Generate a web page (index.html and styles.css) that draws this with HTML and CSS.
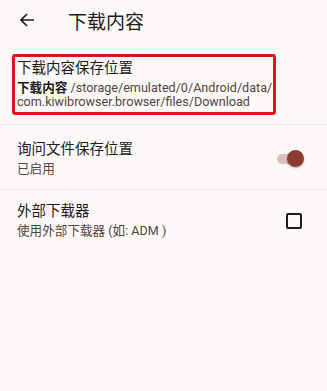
FILE: index.html
```html
<!DOCTYPE html>
<html lang="zh-CN">
<head>
  <meta charset="UTF-8">
  <meta name="viewport" content="width=device-width, initial-scale=1.0">
  <title>下载内容</title>
  <link rel="stylesheet" href="styles.css">
</head>
<body>

<div class="screen">
  <div class="toolbar">
    <svg class="back" width="16" height="16" viewBox="0 0 16 16">
      <path d="M15 8H2M8 2L2 8l6 6" fill="none" stroke="#201a19" stroke-width="1.7"/>
    </svg>
    <div class="title">下载内容</div>
  </div>

  <div class="pref first">
    <div class="highlight">
      <div class="pref-title">下载内容保存位置</div>
      <div class="pref-summary"><b>下载内容</b> /storage/emulated/0/Android/data/<br>com.kiwibrowser.browser/files/Download</div>
    </div>
  </div>

  <div class="pref row">
    <div class="pref-text">
      <div class="pref-title">询问文件保存位置</div>
      <div class="pref-summary">已启用</div>
    </div>
    <div class="switch">
      <div class="track"></div>
      <div class="thumb"></div>
    </div>
  </div>

  <div class="pref row last">
    <div class="pref-text">
      <div class="pref-title">外部下载器</div>
      <div class="pref-summary">使用外部下载器 (如: ADM )</div>
    </div>
    <div class="checkbox"></div>
  </div>
</div>

</body>
</html>
```

FILE: styles.css
```css
body {
  margin: 0;
  background-color: #fdf8f8;
  font-family: Roboto, "Noto Sans CJK SC", sans-serif;
  color: #201a19;
}

.screen {
  width: 327px;
  height: 391px;
}

.toolbar {
  display: flex;
  align-items: center;
  height: 40px;
  padding-left: 19px;
}

.back {
  margin-right: 33px;
}

.title {
  font-size: 19px;
}

.pref {
  border-bottom: 1px solid #efe6e5;
}

.pref.first {
  padding: 14px 0 9px 12px;
}

.highlight {
  width: 256px;
  border: 3px solid #e0141e;
  border-radius: 3px;
  padding: 2px 0 3px 2px;
}

.pref-title {
  font-size: 14.5px;
  line-height: 20px;
}

.pref-summary {
  font-size: 12.6px;
  line-height: 14px;
  color: #534341;
}

.highlight .pref-summary {
  margin-top: 2px;
}

.pref-summary b {
  color: #201a19;
}

.row {
  display: flex;
  align-items: center;
  padding: 15px 23px 11px 17px;
}

.row .pref-summary {
  line-height: 18px;
}

.row.last {
  padding-top: 12px;
  border-bottom: none;
}

.pref-text {
  flex: 1;
}

.switch {
  position: relative;
  width: 28px;
  height: 18px;
  margin-right: -1px;
}

.track {
  position: absolute;
  left: 0;
  top: 4px;
  width: 24px;
  height: 10px;
  border-radius: 5px;
  background-color: #dcc0bc;
}

.thumb {
  position: absolute;
  right: 1px;
  top: 0;
  width: 17px;
  height: 17px;
  border-radius: 50%;
  background-color: #8c3a2e;
  box-shadow: 0 1px 2px rgba(0, 0, 0, 0.3);
}

.checkbox {
  width: 12px;
  height: 12px;
  border: 2px solid #201a19;
  border-radius: 2px;
  margin-right: 2px;
}
```
